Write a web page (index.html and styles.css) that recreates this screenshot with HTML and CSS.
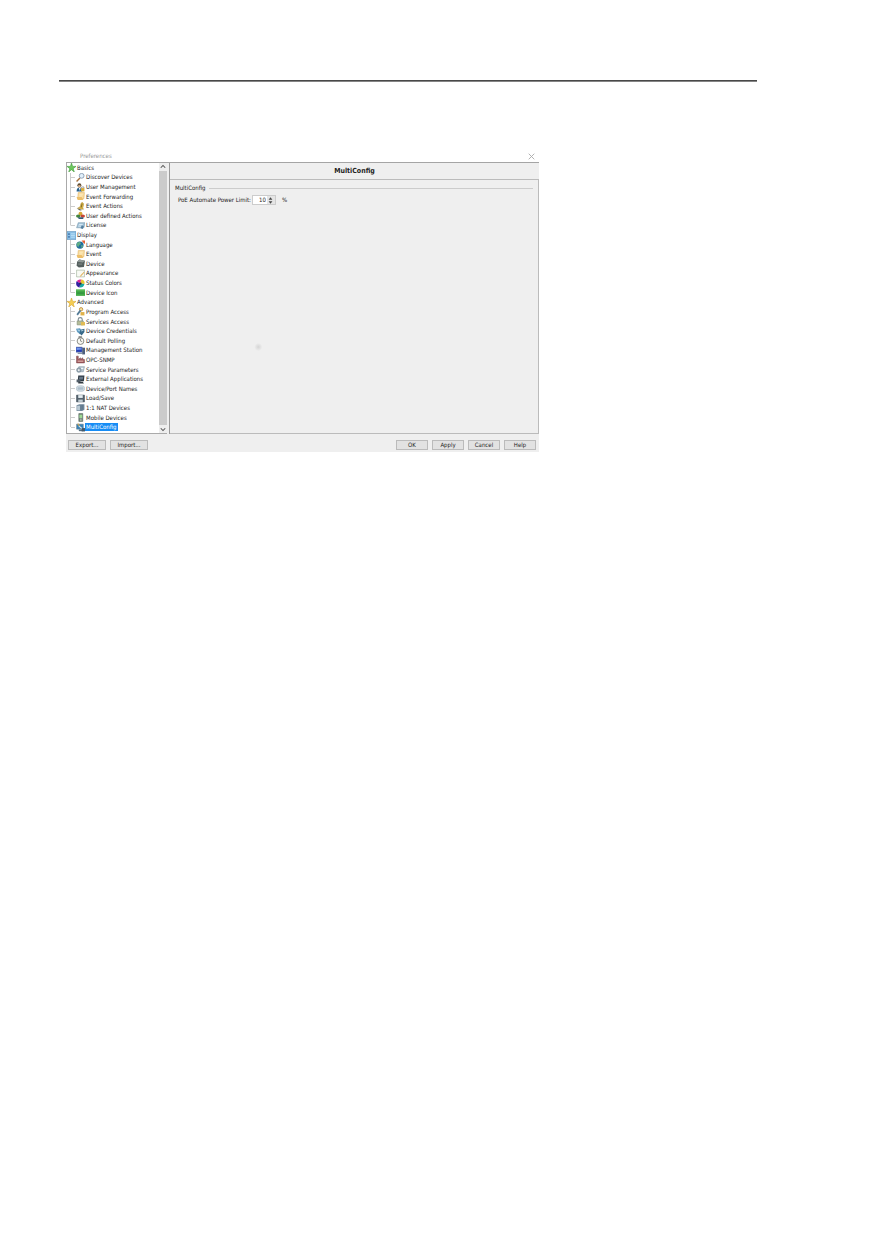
FILE: index.html
```html
<!DOCTYPE html>
<html lang="en">
<head>
  <meta charset="UTF-8">
  <meta name="viewport" content="width=device-width, initial-scale=1.0">
  <title>Preferences</title>
  <link rel="stylesheet" href="styles.css">
</head>
<body>
  <hr class="page-rule">

  <main class="dialog">
    <header class="titlebar">
      <span>Preferences</span>
      <button type="button" class="close" aria-label="Close">
        <svg viewBox="0 0 10 10"><path d="M1 1l8 8M9 1l-8 8" stroke="#aaa" stroke-width="1.3"/></svg>
      </button>
    </header>

    <div class="content">
      <nav class="sidebar">
        <ul class="tree">
          <li class="group">
            <div class="row"><svg viewBox="0 0 16 16"><path d="M8 0l2 6h6l-5 4 2 6-5-4-5 4 2-6-5-4h6z" fill="#6cc85c" stroke="#3d9638"/></svg>Basics</div>
            <ul>
              <li class="leaf"><svg viewBox="0 0 16 16"><path d="M7 9l-6 6" stroke="#a4703c" stroke-width="2.5"/><circle cx="10" cy="5" r="4.3" fill="#e2f0fb" stroke="#8195ad" stroke-width="1.5"/></svg><span>Discover Devices</span></li>
              <li class="leaf"><svg viewBox="0 0 16 16"><circle cx="6" cy="4" r="3.5" fill="#5b4a32"/><path d="M4 4h4v4H4z" fill="#e8b98b"/><path d="M1 15c0-5 2-7 5-7s5 2 5 7z" fill="#28628e"/><path d="M9 9h6v6H9z" fill="#d9ac38"/><path d="M5 9l2 5 1-5z" fill="#fff"/><path d="M10 9V7h4v2" fill="none" stroke="#666"/></svg><span>User Management</span></li>
              <li class="leaf"><svg viewBox="0 0 16 16"><path d="M4 1h11l-1 11H3z" fill="#f9dda0" stroke="#dfb364"/><path d="M1 9h9l3 5H3z" fill="#edbf69"/><path d="M6 4h6M6 7h5" stroke="#fff4d5"/></svg><span>Event Forwarding</span></li>
              <li class="leaf"><svg viewBox="0 0 16 16"><path d="M11 1c4 1 2 6 1 9l1 3-10-2 4-2c2-3 1-8 4-8z" fill="#e5bd43" stroke="#a48530"/><path d="M1 11l10 3-4 1z" fill="#4e4c36"/><path d="M11 3l-2 7" stroke="#685b25" stroke-width="1.5"/></svg><span>Event Actions</span></li>
              <li class="leaf"><svg viewBox="0 0 16 16"><circle cx="8" cy="5" r="3.5" fill="#d6a535"/><ellipse cx="4" cy="9" rx="4" ry="3" fill="#44863c"/><ellipse cx="12" cy="9" rx="4" ry="3" fill="#c74635"/><path d="M3 11h10v3H5z" fill="#345b78"/></svg><span>User defined Actions</span></li>
              <li class="leaf last"><svg viewBox="0 0 16 16"><path d="M4 3h12l-2 9H1z" fill="#9ebfd5" stroke="#7797ad"/><path d="M5 6h7M4 9h6" stroke="#e9f7ff" stroke-width="1.5"/><path d="M10 8l4 1-2 5-4-1z" fill="#547e9e"/></svg><span>License</span></li>
            </ul>
          </li>
          <li class="group">
            <div class="row"><svg viewBox="0 0 16 16"><path d="M0 1h16v14H0z" fill="#8cc2e8" stroke="#4c86b5"/><path d="M2 4h3v3H2zm0 5h3v3H2z" fill="#4a7bb0"/><path d="M7 5h7M7 8h7M7 11h7" stroke="#d3efff"/></svg>Display</div>
            <ul>
              <li class="leaf"><svg viewBox="0 0 16 16"><circle cx="7" cy="9" r="6.5" fill="#226d9d"/><path d="M2 5l5-2 2 4-3 2-2 4-3-4zM9 9l4 1-3 5z" fill="#5fae83"/><path d="M10 1h6v6l-3-2z" fill="#e56135"/></svg><span>Language</span></li>
              <li class="leaf"><svg viewBox="0 0 16 16"><path d="M4 1h11l-1 11H3z" fill="#f9dda0" stroke="#dfb364"/><path d="M1 9h9l3 5H3z" fill="#edbf69"/><path d="M6 4h6M6 7h5" stroke="#fff4d5"/></svg><span>Event</span></li>
              <li class="leaf"><svg viewBox="0 0 16 16"><path d="M6 1l10 2-2 11-9 1-4-3 1-7z" fill="#56605f"/><path d="M6 1l10 2-4 3-10-1z" fill="#939b99"/><path d="M4 9h7" stroke="#8d9691" stroke-width="1.5"/></svg><span>Device</span></li>
              <li class="leaf"><svg viewBox="0 0 16 16"><path d="M1 2h14v12H1z" fill="#f8faf4" stroke="#95a98e"/><path d="M15 6l-6 7-2 1 1-3 6-6z" fill="#e1b25c"/></svg><span>Appearance</span></li>
              <li class="leaf"><svg viewBox="0 0 16 16"><path d="M8 8L1 4a8 8 0 0 1 8-3z" fill="#df269c"/><path d="M8 8l1-7c5 0 7 4 6 8z" fill="#e8c62f"/><path d="M8 8l7 1c-1 5-5 7-9 6z" fill="#18a8a2"/><path d="M8 8l-2 7c-5-1-7-6-5-11z" fill="#3222a2"/><circle cx="8" cy="8" r="2" fill="#292929"/></svg><span>Status Colors</span></li>
              <li class="leaf last"><svg viewBox="0 0 16 16"><path d="M0 2h16v12H0z" fill="#42aa46"/><path d="M0 3h16" stroke="#93d98d" stroke-width="2"/><path d="M2 8h12v2H2z" fill="#2f8a40"/></svg><span>Device Icon</span></li>
            </ul>
          </li>
          <li class="group">
            <div class="row"><svg viewBox="0 0 16 16"><path d="M8 0l2 6h6l-5 4 2 6-5-4-5 4 2-6-5-4h6z" fill="#f5ce53" stroke="#d4a12a"/></svg>Advanced</div>
            <ul>
              <li class="leaf"><svg viewBox="0 0 16 16"><circle cx="9" cy="4" r="3" fill="#f5dfa0" stroke="#bd8b36" stroke-width="1.5"/><path d="M8 6l-6 8" stroke="#547b97" stroke-width="3"/><path d="M8 9h7v6H8z" fill="#e0b249"/></svg><span>Program Access</span></li>
              <li class="leaf"><svg viewBox="0 0 16 16"><path d="M4 7V4c0-4 7-4 7 0v3" fill="none" stroke="#7d8d92" stroke-width="2"/><path d="M2 7h11v7H2z" fill="#b4bd98" stroke="#7f8975"/><path d="M9 9h7v6H9z" fill="#e3bc52"/></svg><span>Services Access</span></li>
              <li class="leaf"><svg viewBox="0 0 16 16"><path d="M0 3l7-1 4 5-4 6-5-4z" fill="#639dc2"/><path d="M8 5l7-2v6l-5 6-4-4z" fill="#386989"/><path d="M3 5l4 2M9 7l4-1" stroke="#c4e2ef" stroke-width="1.5"/></svg><span>Device Credentials</span></li>
              <li class="leaf"><svg viewBox="0 0 16 16"><circle cx="8" cy="9" r="6" fill="#f8f8f3" stroke="#777973" stroke-width="1.5"/><path d="M5 1h5v2H5zM8 5v4l3 1" fill="none" stroke="#6e706d" stroke-width="1.3"/></svg><span>Default Polling</span></li>
              <li class="leaf"><svg viewBox="0 0 16 16"><path d="M0 2h11v9H0z" fill="#233dba" stroke="#6d7fa0"/><path d="M1 3l9 1v2L1 7z" fill="#7198ec"/><path d="M11 3h5v12h-5z" fill="#4e5f7c"/><path d="M3 13h8" stroke="#7a879a" stroke-width="2"/></svg><span>Management Station</span></li>
              <li class="leaf"><svg viewBox="0 0 16 16"><path d="M1 14V2h3v6l4-3v3l4-3v3h3v6z" fill="#a65d61" stroke="#784449"/><path d="M3 11h10" stroke="#ddb4ae" stroke-width="2"/></svg><span>OPC-SNMP</span></li>
              <li class="leaf"><svg viewBox="0 0 16 16"><path d="M5 3h10l-2 9H3z" fill="#bac8d2" stroke="#8195a4"/><circle cx="5" cy="9" r="4" fill="#9baab5" stroke="#748794"/><circle cx="5" cy="9" r="1.5" fill="#fff"/><path d="M9 6h4" stroke="#f3fbff" stroke-width="2"/></svg><span>Service Parameters</span></li>
              <li class="leaf"><svg viewBox="0 0 16 16"><path d="M4 1h11l-1 10H3z" fill="#303b46"/><path d="M6 3h7l-1 5H5z" fill="#667786"/><path d="M1 8h7v5H1z" fill="#55606b"/><path d="M4 12h8l2 3H4z" fill="#343d44"/></svg><span>External Applications</span></li>
              <li class="leaf"><svg viewBox="0 0 16 16"><ellipse cx="8" cy="8" rx="8" ry="5" fill="#d3dce2" stroke="#9cb0be"/><path d="M3 7h10M3 9h10" stroke="#7b99ae"/></svg><span>Device/Port Names</span></li>
              <li class="leaf"><svg viewBox="0 0 16 16"><path d="M1 2h14v12H1z" fill="#56636e" stroke="#364350"/><path d="M4 2h8v5H4z" fill="#e4edf0"/><path d="M4 10h8v4H4z" fill="#c5d1d6"/></svg><span>Load/Save</span></li>
              <li class="leaf"><svg viewBox="0 0 16 16"><path d="M1 4l5-2h9v10l-4 2H1z" fill="#748b9e"/><path d="M2 5h5v8H2z" fill="#bccbd5"/><path d="M9 3v10M12 3v9" stroke="#4f6679"/></svg><span>1:1 NAT Devices</span></li>
              <li class="leaf"><svg viewBox="0 0 16 16"><path d="M5 1h7v14H5z" fill="#6f8076" stroke="#52645a"/><path d="M6 3h5v6H6z" fill="#9ddb94"/><path d="M7 11h3M7 13h3" stroke="#dbe8de"/></svg><span>Mobile Devices</span></li>
              <li class="leaf last selected"><svg viewBox="0 0 16 16"><path d="M1 2h12v9H1z" fill="#3783b7" stroke="#6e8291"/><path d="M5 13h8" stroke="#566d7e" stroke-width="3"/><path d="M5 5l8 7" stroke="#dce6eb" stroke-width="2"/><path d="M10 9h6v6h-6z" fill="#44596a"/><path d="M3 1l3 4" stroke="#d7a64b" stroke-width="2"/></svg><span>MultiConfig</span></li>
            </ul>
          </li>
        </ul>
        <div class="scrollbar">
          <button type="button" aria-label="Scroll up"><svg viewBox="0 0 8 8"><path d="M1 5l3-3 3 3" fill="none" stroke="#555" stroke-width="1.4"/></svg></button>
          <div class="thumb"></div>
          <button type="button" aria-label="Scroll down"><svg viewBox="0 0 8 8"><path d="M1 3l3 3 3-3" fill="none" stroke="#555" stroke-width="1.4"/></svg></button>
        </div>
      </nav>

      <section class="panel">
        <h1>MultiConfig</h1>
        <form class="settings">
          <h2>MultiConfig</h2>
          <div class="field">
            <label for="powerLimit">PoE Automate Power Limit:</label>
            <div class="spinner">
              <input type="number" id="powerLimit" value="10" min="0" max="100">
              <div class="steps">
                <button type="button" aria-label="Increase"><svg viewBox="0 0 8 4"><path d="M1 4l3-4 3 4z" fill="#444"/></svg></button>
                <button type="button" aria-label="Decrease"><svg viewBox="0 0 8 4"><path d="M1 0l3 4 3-4z" fill="#444"/></svg></button>
              </div>
            </div>
            <span>%</span>
          </div>
        </form>
      </section>
    </div>

    <footer class="actions">
      <button type="button" class="wide">Export...</button>
      <button type="button" class="wide">Import...</button>
      <div class="spacer"></div>
      <button type="button">OK</button>
      <button type="button">Apply</button>
      <button type="button">Cancel</button>
      <button type="button">Help</button>
    </footer>
  </main>
</body>
</html>
```

FILE: styles.css
```css
* { box-sizing: border-box; }
body { margin: 0; padding: 80px 118px 40px 59px; background: #fff; color: #222; font: 6px/8px "DejaVu Sans Condensed", "Liberation Sans", sans-serif; }
ul { list-style: none; margin: 0; padding: 0; }
h1, h2 { margin: 0; }
button, input { font: inherit; color: inherit; padding: 0; margin: 0; }
svg { display: block; }
.page-rule { margin: 0; border: 0; height: 2px; background: linear-gradient(#484848 50%, #858585 50%); }

.dialog { max-width: 473px; margin: 68px 0 0 7px; background: #efefef; }
.titlebar { display: flex; justify-content: space-between; align-items: center; height: 12px; padding: 0 4px 0 14px; background: #fff; color: #999; }
.close { border: 0; background: none; }
.close svg { width: 7px; height: 7px; }

.content { display: flex; gap: 2px; border-top: 1px solid #a5a5a5; }
.sidebar { display: flex; flex: 0 0 101px; height: 271px; background: #fff; border-left: 1px solid #aaa; border-bottom: 1px solid #aaa; }

/* groups are flattened so every row gets the same share of the height */
.tree { flex: 1; display: grid; grid-auto-rows: 1fr; padding-bottom: 1px; white-space: nowrap; }
.group, .group ul { display: contents; }
.row, .leaf { display: flex; align-items: center; min-height: 0; }
.row { gap: 1px; }
.row svg { width: 9px; height: 9px; }
.leaf { padding-left: 4px; background: linear-gradient(#ccc, #ccc) 3px 0 / 1px 100% no-repeat; }
.leaf.last { background-size: 1px 50%; }
.leaf::before { content: ""; width: 4px; height: 1px; margin-right: 1px; background: #ccc; }
.leaf svg { width: 9px; height: 9px; }
.leaf span { padding: 0 1px; }
.selected span { background: #168cf5; color: #fff; }

.scrollbar { display: flex; flex-direction: column; width: 8px; background: #eee; }
.scrollbar button { height: 8px; border: 0; background: #eee; }
.scrollbar svg { width: 6px; height: 6px; margin: auto; }
.thumb { flex: 1; background: #cbcbcb; }

.panel { flex: 1; display: flex; flex-direction: column; border-left: 1px solid #999; }
.panel h1 { padding: 4px 0; border-bottom: 1px solid #bbb; font-size: 7px; font-weight: bold; text-align: center; }
/* faint spot left of the middle of the pane */
.settings { flex: 1; padding: 4px 5px; border: solid #bbb; border-width: 0 1px 1px 0; background: radial-gradient(circle at 24% 66%, #d5d5d5 0, #efefef 4px); }
.settings h2 { display: flex; align-items: center; gap: 3px; font-size: 6px; font-weight: normal; }
.settings h2::after { content: ""; flex: 1; height: 1px; background: #ccc; }
.field { display: flex; align-items: center; padding: 3px; }
.field label { margin-right: 1px; }
.spinner { display: flex; width: 24px; height: 10px; margin-right: 6px; border: 1px solid #ccc; background: #fff; }
.spinner input { flex: 1; min-width: 0; border: 0; background: none; text-align: right; appearance: textfield; }
.spinner input::-webkit-inner-spin-button { appearance: none; margin: 0; }
.steps { display: flex; flex-direction: column; width: 8px; margin-left: 1px; background: #e5e5e5; }
.steps button { flex: 1; border: 0; background: none; }
.steps svg { width: 5px; height: 3px; margin: auto; }

.actions { display: flex; gap: 4px; padding: 6px 3px 2px 2px; }
.actions button { width: 32px; height: 10px; border: 1px solid #bbb; background: #e2e2e2; line-height: 8px; }
.actions .wide { width: 38px; }
.spacer { flex: 1; }
```
